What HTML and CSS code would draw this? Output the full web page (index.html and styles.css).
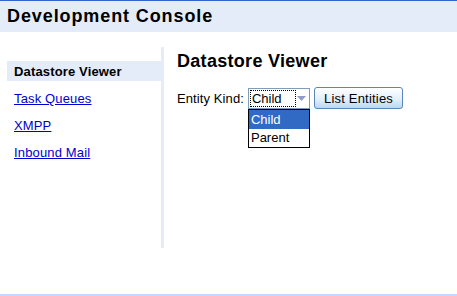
FILE: index.html
```html
<!DOCTYPE html>
<html lang="en">
<head>
  <meta charset="UTF-8" />
  <title>Development Console</title>
  <link rel="stylesheet" href="styles.css">
</head>
<body>
  <header class="top">
    <h1>Development Console</h1>
  </header>

  <div class="layout">
    <nav class="sidebar">
      <ul>
        <li class="current">Datastore Viewer</li>
        <li><a href="/_ah/admin/queues">Task Queues</a></li>
        <li><a href="/_ah/admin/xmpp">XMPP</a></li>
        <li><a href="/_ah/admin/inboundmail">Inbound Mail</a></li>
      </ul>
    </nav>

    <main class="content">
      <h2>Datastore Viewer</h2>
      <form class="kind-form">
        <label>Entity Kind:</label>
        <div class="select">
          <div class="select-box">
            <span class="select-value">Child</span>
            <span class="select-arrow">
              <svg width="9" height="5" viewBox="0 0 9 5"><path d="M0 0H9L4.5 5Z" fill="#8f9cc8"/></svg>
            </span>
          </div>
          <ul class="dropdown">
            <li class="picked">Child</li>
            <li>Parent</li>
          </ul>
        </div>
        <button type="button">List Entities</button>
      </form>
    </main>
  </div>

  <footer class="bottom-rule"></footer>
</body>
</html>
```

FILE: styles.css
```css
body {
  margin: 0;
  font-family: "Liberation Sans", Arial, sans-serif;
  font-size: 13px;
  color: #000;
  background: #fff;
}

.top {
  border-top: 1px solid #3366cc;
  background-color: #e5ecf9;
  height: 31px;
  padding-left: 7px;
}

.top h1 {
  margin: 0;
  font-size: 18px;
  letter-spacing: 0.9px;
  line-height: 31px;
}

.layout {
  display: flex;
  margin-top: 15px;
}

.sidebar {
  width: 154px;
  margin-left: 7px;
  height: 201px;
  border-right: 3px solid #e5ecf9;
}

.sidebar ul {
  list-style: none;
  margin: 14px 0 0;
  padding: 0;
}

.sidebar li {
  height: 20px;
  line-height: 21px;
  padding-left: 7px;
  margin-bottom: 7px;
  letter-spacing: 0.15px;
}

.sidebar li.current {
  background-color: #e5ecf9;
  font-weight: bold;
}

.sidebar a {
  color: #0000cc;
}

.content {
  padding-left: 13px;
}

.content h2 {
  margin: 3px 0 0;
  font-size: 18px;
  letter-spacing: 0.3px;
  line-height: 22px;
}

.kind-form {
  display: flex;
  align-items: center;
  margin-top: 15px;
}

.kind-form label {
  margin-right: 4px;
  letter-spacing: 0.1px;
}

.select {
  position: relative;
  width: 62px;
  margin-right: 4px;
}

.select-box {
  display: flex;
  align-items: center;
  height: 19px;
  border: 1px solid #7f9db9;
  background: #fff;
}

.select-value {
  margin: 0 0 0 2px;
  padding: 0 1px;
  line-height: 15px;
  outline: 1px dotted #000;
  width: 42px;
}

.select-arrow {
  margin-left: auto;
  width: 14px;
  display: flex;
  justify-content: center;
}

.dropdown {
  position: absolute;
  top: 21px;
  left: 0;
  width: 60px;
  list-style: none;
  margin: 0;
  padding: 0;
  border: 1px solid #000;
  background: #fff;
}

.dropdown li {
  height: 18px;
  line-height: 18px;
  padding-left: 2px;
}

.dropdown li.picked {
  height: 19px;
  line-height: 19px;
  background-color: #316ac5;
  color: #fff;
}

.kind-form button {
  font-family: inherit;
  font-size: 13px;
  letter-spacing: 0.2px;
  height: 22px;
  padding: 0 9px;
  border: 1px solid #5b86b8;
  border-radius: 3px;
  background: linear-gradient(#ffffff, #dfeefc 60%, #bcd6f2);
  color: #000;
}

.bottom-rule {
  margin-top: 46px;
  height: 2px;
  background-color: #c3d9ff;
}
```
